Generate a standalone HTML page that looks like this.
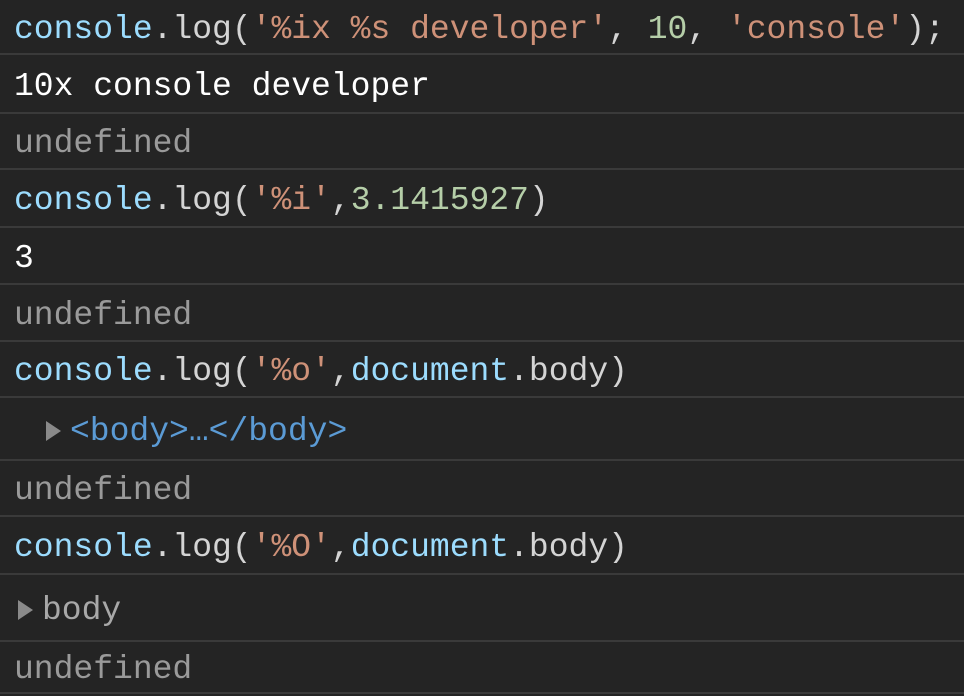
<!DOCTYPE html>
<html><head><style>
html,body{margin:0;padding:0;background:#242424;width:964px;height:696px;overflow:hidden}
.r{position:absolute;left:0;width:964px;border-bottom:2px solid #3a3a3a;box-sizing:border-box;display:flex;align-items:center;padding-left:14px;padding-top:5px;font-family:"Liberation Mono",monospace;font-size:33px;white-space:pre;color:#e8e8e8}
.b{color:#9cdcfe}.w{color:#d4d4d4}.s{color:#ce9178}.n{color:#b5cea8}.u{color:#9a9a9a}.t{color:#5b9bd5}.g{color:#a8a8a8}
.tri{display:inline-block;width:0;height:0;border-left:15px solid #8a8a8a;border-top:10px solid transparent;border-bottom:10px solid transparent;margin-right:9px}
</style></head><body>
<div class="r" style="top:0;height:55px"><span class="b">console</span><span class="w">.log(</span><span class="s">'%ix %s developer'</span><span class="w">, </span><span class="n">10</span><span class="w">, </span><span class="s">'console'</span><span class="w">);</span></div>
<div class="r" style="top:55px;height:59px;color:#fff">10x console developer</div>
<div class="r u" style="top:114px;height:56px">undefined</div>
<div class="r" style="top:170px;height:58px"><span class="b">console</span><span class="w">.log(</span><span class="s">'%i'</span><span class="w">,</span><span class="n">3.1415927</span><span class="w">)</span></div>
<div class="r" style="top:228px;height:57px;color:#fff">3</div>
<div class="r u" style="top:285px;height:57px">undefined</div>
<div class="r" style="top:342px;height:56px"><span class="b">console</span><span class="w">.log(</span><span class="s">'%o'</span><span class="w">,</span><span class="b">document</span><span class="w">.body)</span></div>
<div class="r" style="top:398px;height:63px;padding-left:46px"><span class="tri"></span><span class="t">&lt;body&gt;…&lt;/body&gt;</span></div>
<div class="r u" style="top:461px;height:56px">undefined</div>
<div class="r" style="top:517px;height:58px"><span class="b">console</span><span class="w">.log(</span><span class="s">'%O'</span><span class="w">,</span><span class="b">document</span><span class="w">.body)</span></div>
<div class="r" style="top:575px;height:67px;padding-left:18px"><span class="tri"></span><span class="g">body</span></div>
<div class="r u" style="top:642px;height:52px">undefined</div>
</body></html>
